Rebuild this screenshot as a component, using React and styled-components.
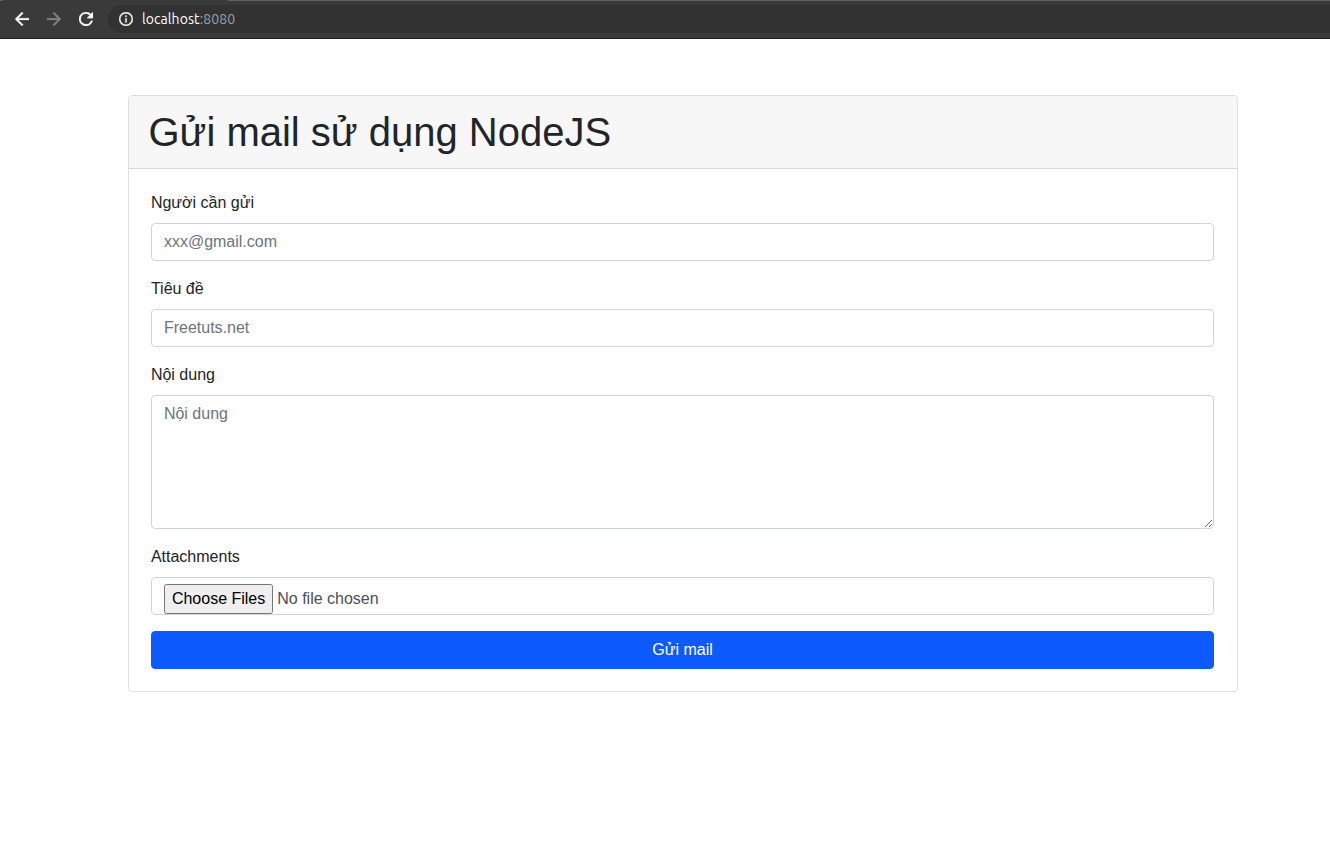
import React from "react";
import styled, { createGlobalStyle } from "styled-components";

const GlobalStyle = createGlobalStyle`
  *, *::before, *::after { box-sizing: border-box; }
  body {
    margin: 0;
    background: #fff;
    color: #212529;
    font: 400 16px/1.5 "Liberation Sans", Arial, sans-serif;
  }
`;

const Toolbar = styled.header`
  display: flex;
  align-items: center;
  height: 39px;
  padding: 4px 0 4px 15px;
  background:
    linear-gradient(#606060, #606060) 0 0 / 3px 1px no-repeat,
    linear-gradient(#606060, #606060) 228px 0 / 100% 1px no-repeat,
    #3a3a3a;
  border-bottom: 1px solid #1f1b1d;
`;

const NavIcon = styled.svg`
  flex: none;
  width: 14px;
  height: 14px;
  margin-right: 18px;
  fill: ${(p) => (p.$muted ? "#828282" : "#fff")};
  stroke: ${(p) => (p.$muted ? "#828282" : "#fff")};
  stroke-width: 0.3;
`;

const AddressBar = styled.div`
  display: flex;
  align-items: center;
  flex: 1;
  height: 28px;
  margin-left: -3px;
  padding-left: 11px;
  background: #323232;
  border-radius: 14px 0 0 14px;
`;

const InfoIcon = styled.svg`
  width: 14px;
  height: 14px;
  margin-right: 9px;
  fill: #f0f0f0;
`;

const Url = styled.span`
  color: #fff;
  font: 14px/20px Ubuntu, "Noto Sans", sans-serif;
  letter-spacing: 0.08px;
`;

const Port = styled.span`
  color: #9aa0a6;
`;

const Card = styled.main`
  width: 1110px;
  margin: 56px 0 0 127.5px;
  border: 1px solid #dfdfdf;
  border-radius: 4px;
  overflow: hidden;
`;

const CardHeader = styled.div`
  padding: 12px 20px;
  background: #f7f7f7;
  border-bottom: 1px solid #d9d9d9;
`;

const Title = styled.h1`
  margin: 0;
  font-size: 40px;
  font-weight: 400;
  line-height: 48px;
`;

const Form = styled.form`
  display: flex;
  flex-direction: column;
  gap: 16px;
  padding: 22px 22.4px;
`;

const Field = styled.div`
  display: flex;
  flex-direction: column;
  gap: 8px;
`;

const Label = styled.label`
  height: 24px;
`;

const Input = styled.input`
  display: block;
  width: 100%;
  height: ${(p) => p.$height || 38}px;
  margin: 0;
  padding: 6px 12px;
  border: 1px solid #ced4da;
  border-radius: 4px;
  background: #fff;
  color: #495057;
  font: inherit;
  overflow: auto;
  outline: none;
  &::placeholder { color: #6c757d; opacity: 1; }
  &[type="file"] { overflow: hidden; }
  &::file-selector-button { height: 30px; font: inherit; }
`;

const SubmitButton = styled.button`
  height: 38px;
  padding: 6px 12px;
  border: 1px solid #0d5bff;
  border-radius: 4px;
  background: #0d5bff;
  color: #fff;
  font: inherit;
`;

export default function App() {
  return (
    <>
      <GlobalStyle />
      <Toolbar>
        <NavIcon viewBox="4 4 16 16" aria-label="Back">
          <path d="M20 11H7.83l5.59-5.59L12 4l-8 8 8 8 1.41-1.41L7.83 13H20v-2z" />
        </NavIcon>
        <NavIcon viewBox="4 4 16 16" $muted aria-label="Forward">
          <path d="M12 4l-1.41 1.41L16.17 11H4v2h12.17l-5.58 5.59L12 20l8-8z" />
        </NavIcon>
        <NavIcon viewBox="4 4 16 16" aria-label="Reload">
          <path d="M17.65 6.35A7.96 7.96 0 0 0 12 4a8 8 0 1 0 7.73 10h-2.08A6 6 0 1 1 12 6c1.66 0 3.14.69 4.22 1.78L13 11h7V4l-2.35 2.35z" />
        </NavIcon>
        <AddressBar>
          <InfoIcon viewBox="2 2 20 20">
            <path d="M11 7h2v2h-2zm0 4h2v6h-2zm1-9a10 10 0 1 0 0 20 10 10 0 0 0 0-20zm0 18a8 8 0 1 1 0-16 8 8 0 0 1 0 16z" stroke="#f0f0f0" strokeWidth=".4" />
          </InfoIcon>
          <Url>localhost<Port>:8080</Port></Url>
        </AddressBar>
      </Toolbar>
      <Card>
        <CardHeader>
          <Title>Gửi mail sử dụng NodeJS</Title>
        </CardHeader>
        <Form>
          <Field>
            <Label htmlFor="to">Người cần gửi</Label>
            <Input id="to" type="email" placeholder="xxx@gmail.com" />
          </Field>
          <Field>
            <Label htmlFor="subject">Tiêu đề</Label>
            <Input id="subject" type="text" placeholder="Freetuts.net" />
          </Field>
          <Field>
            <Label htmlFor="content">Nội dung</Label>
            <Input as="textarea" id="content" $height={134} placeholder="Nội dung" />
          </Field>
          <Field>
            <Label htmlFor="attachments">Attachments</Label>
            <Input id="attachments" type="file" multiple />
          </Field>
          <SubmitButton type="button">Gửi mail</SubmitButton>
        </Form>
      </Card>
    </>
  );
}
